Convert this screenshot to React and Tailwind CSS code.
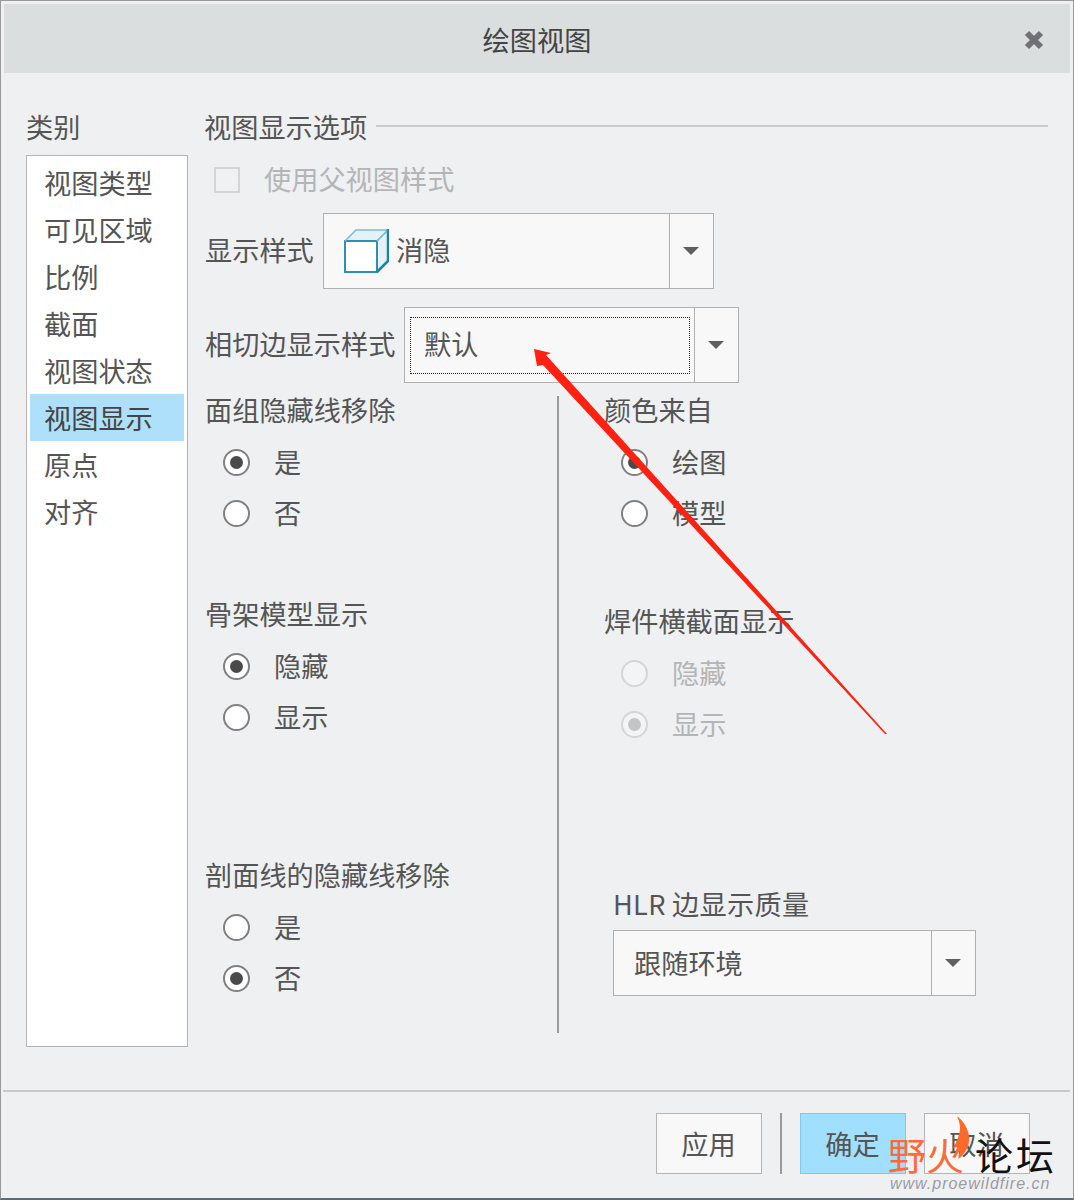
const font = { fontFamily: '"Noto Sans CJK SC", "Liberation Sans", sans-serif' };

const Radio = ({ label, checked, disabled }) => (
  <div className="flex items-center h-[51px]">
    <span className={`flex items-center justify-center w-[27px] h-[27px] rounded-full border-[2px] ${disabled ? 'border-[#d4d5d7] bg-[#f3f4f5]' : 'border-[#808080] bg-white'}`}>
      {checked && <span className={`w-[13px] h-[13px] rounded-full ${disabled ? 'bg-[#c4c4c4]' : 'bg-[#4a4a4a]'}`} />}
    </span>
    <span className={`ml-[24px] pb-[2px] ${disabled ? 'text-[#b4b5b6]' : ''}`}>{label}</span>
  </div>
);

const Section = ({ title, className = '', indent = 'pl-[17px]', children }) => (
  <div className={className}>
    <div className="h-[30px] pb-[2px] flex items-center whitespace-nowrap">{title}</div>
    <div className={`mt-[11px] ${indent}`}>{children}</div>
  </div>
);

const Caret = () => <span className="w-0 h-0 border-x-[8px] border-x-transparent border-t-[8px] border-t-[#5f5f5f]" />;

const Select = ({ className, children }) => (
  <div className={`flex border border-[#b0b0b0] bg-[#f8f8f8] ${className}`}>
    <div className="flex-1 flex items-center min-w-0">{children}</div>
    <div className="flex items-center justify-center border-l border-[#b0b0b0] w-[44px] pr-[2px]"><Caret /></div>
  </div>
);

const CubeIcon = () => (
  <svg width="46" height="46" viewBox="0 0 46 46" fill="none" className="ml-[19px] shrink-0">
    <path d="M2 13 L13 2 H45 V33 L34 44 H2 Z" fill="#e4f1f7" />
    <rect x="2" y="13" width="32" height="31" fill="#ffffff" stroke="#2a8fbd" strokeWidth="2" />
    <path d="M2 13 L13 2 H45 L34 13" stroke="#7db9d4" strokeWidth="1.5" />
    <path d="M45 1 V33 L34 44" stroke="#1f7fa8" strokeWidth="2.5" />
    <path d="M34 13 L45 2" stroke="#7db9d4" strokeWidth="1.5" strokeDasharray="3 2" />
  </svg>
);

const Button = ({ children, primary }) => (
  <button className={`w-[106px] h-[61px] border flex items-center justify-center pr-[1px] ${primary ? 'bg-[#a1dfff] border-[#7ccaf3]' : 'bg-[#f8f8f8] border-[#b4b4b4]'}`}>{children}</button>
);

const categories = ['视图类型', '可见区域', '比例', '截面', '视图状态', '视图显示', '原点', '对齐'];

export default function App() {
  return (
    <div className="relative w-[1074px] h-[1200px] flex flex-col overflow-hidden bg-[#eff0f2] border border-[#999999] border-b-[2px] border-b-[#5c6b78] text-[27.2px] leading-none text-[#555555]" style={font}>
      <div className="relative mx-[3px] mt-[3px] h-[69px] pt-[2px] shrink-0 bg-[#dbdedf] flex items-center justify-center text-[#444444]">
        绘图视图
        <svg width="22" height="22" viewBox="0 0 22 22" className="absolute right-[25px] top-[25px]">
          <path d="M4 4 L18 18 M18 4 L4 18" stroke="#6f7176" strokeWidth="6" />
        </svg>
      </div>

      <div className="h-[1017px] shrink-0 flex pl-[25px] pt-[35px]">
        <div className="w-[162px] shrink-0">
          <div className="h-[47px] pt-[5px]">类别</div>
          <div className="h-[892px] border border-[#b4b4b4] bg-white pt-[3px] px-[3px]">
            {categories.map((c) => (
              <div key={c} className={`h-[47px] pl-[14px] flex items-center ${c === '视图显示' ? 'bg-[#aee0fb] text-[#444444]' : ''}`}>{c}</div>
            ))}
          </div>
        </div>

        <div className="ml-[16px] w-[844px] shrink-0">
          <div className="relative h-[40px] pb-[2px] flex items-center">
            <span className="whitespace-nowrap">视图显示选项</span>
            <span className="absolute left-[172px] right-0 top-[17px] h-[2px] bg-[#c8c9cb]" />
          </div>

          <div className="mt-[12px] h-[40px] flex items-center text-[#b4b5b6]">
            <span className="ml-[10px] w-[26px] h-[26px] border-[2px] border-[#d4d5d7] bg-[#f0f1f3]" />
            <span className="ml-[24px] pb-[2px]">使用父视图样式</span>
          </div>

          <div className="mt-[13px] flex items-center">
            <span className="ml-[1px] w-[118px] pb-[2px] shrink-0 whitespace-nowrap">显示样式</span>
            <Select className="w-[391px] h-[76px]">
              <CubeIcon />
              <span className="ml-[7px] pb-[2px]">消隐</span>
            </Select>
          </div>

          <div className="mt-[18px] flex items-center">
            <span className="ml-[1px] w-[199px] pb-[2px] shrink-0 whitespace-nowrap">相切边显示样式</span>
            <Select className="w-[335px] h-[76px]">
              <div className="ml-[5px] mr-[4px] flex-1 h-[57px] border border-dotted border-[#222222] flex items-center pl-[13px] pb-[2px]">默认</div>
            </Select>
          </div>

          <div className="mt-[13px] h-[637px] flex">
            <div className="w-[353px] shrink-0 pl-[1px]">
              <Section title="面组隐藏线移除" indent="pl-[18px]">
                <Radio label="是" checked />
                <Radio label="否" />
              </Section>
              <Section title="骨架模型显示" indent="pl-[18px]" className="mt-[61px]">
                <Radio label="隐藏" checked />
                <Radio label="显示" />
              </Section>
              <Section title="剖面线的隐藏线移除" indent="pl-[18px]" className="mt-[118px]">
                <Radio label="是" />
                <Radio label="否" checked />
              </Section>
            </div>
            <div className="w-[2px] shrink-0 bg-[#9a9b9d]" />
            <div className="pl-[45px] flex-1">
              <Section title="颜色来自">
                <Radio label="绘图" checked />
                <Radio label="模型" />
              </Section>
              <Section title="焊件横截面显示" className="mt-[68px]">
                <Radio label="隐藏" disabled />
                <Radio label="显示" checked disabled />
              </Section>
              <div className="mt-[140px] ml-[9px] h-[30px] pb-[2px] flex items-center tracking-[0.3px] whitespace-nowrap">HLR 边显示质量</div>
              <Select className="mt-[10px] ml-[9px] w-[363px] h-[66px]">
                <span className="ml-[20px]">跟随环境</span>
              </Select>
            </div>
          </div>
        </div>
      </div>

      <div className="ml-[2px] mr-[3px] border-t-[2px] border-[#c8c9cb] pt-[21px] pr-[40px] flex justify-end items-stretch gap-[18px]">
        <Button>应用</Button>
        <span className="w-[2px] bg-[#9a9b9d]" />
        <Button primary>确定</Button>
        <Button>取消</Button>
      </div>

      {/* annotation arrow drawn on top of the dialog */}
      <svg width="1074" height="1200" className="absolute -left-px -top-px pointer-events-none">
        <polygon points="534,349 551,353 546,355 887,734 885,734 543,365 537,366" fill="#ff2112" />
      </svg>

      {/* forum watermark */}
      <div className="absolute left-[887px] top-[1134px] text-[38px] text-[#ff6a3a] whitespace-nowrap">野火</div>
      <div className="absolute left-[974px] top-[1134px] text-[38px] tracking-[3px] text-[#111111] whitespace-nowrap">论坛</div>
      <svg width="40" height="60" viewBox="0 0 40 60" className="absolute left-[944px] top-[1114px]">
        <path d="M12 1 C26 12 30 32 13 44 C16 36 14 30 8 33 C14 22 18 14 12 1 Z" fill="#ff6a2a" />
      </svg>
      <div className="absolute left-[889px] top-[1175px] text-[16px] italic tracking-[1px] text-[#9a9da3] whitespace-nowrap" style={{ fontFamily: '"Liberation Sans", sans-serif' }}>www.proewildfire.cn</div>
    </div>
  );
}
